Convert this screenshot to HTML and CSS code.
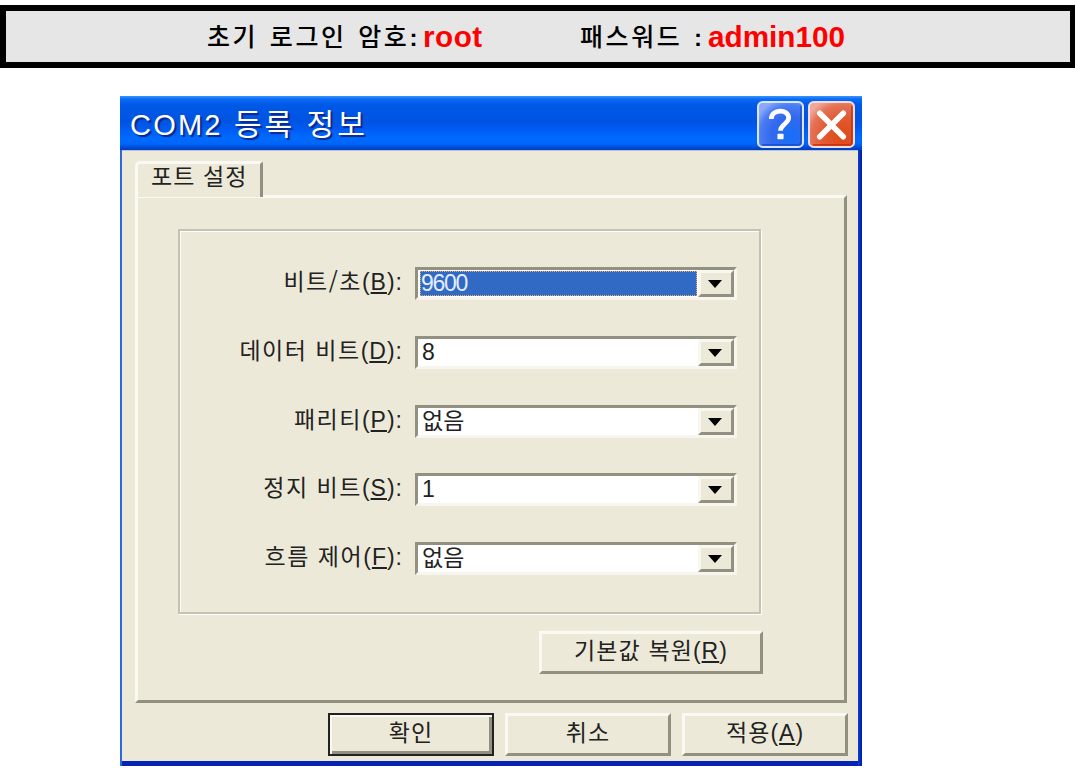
FILE: index.html
```html
<!DOCTYPE html>
<html lang="ko">
<head>
<meta charset="utf-8">
<title>COM2 등록 정보</title>
<link rel="stylesheet" href="styles.css">
</head>
<body>
<header class="banner">
  <span class="banner-label login">초기 로그인 암호<b>:</b></span><strong class="secret root">root</strong>
  <span class="banner-label pass">패스워드 <b>:</b></span><strong class="secret">admin100</strong>
</header>
<main class="dialog">
  <div class="titlebar">
    <h1 class="title"><span class="title-latin">COM2</span> 등록 정보</h1>
    <div class="caption-buttons">
      <svg class="caption" viewBox="0 0 46 46">
        <defs>
          <radialGradient id="blue" cx=".72" cy=".75" r=".85"><stop offset="0" stop-color="#1470f8"/><stop offset=".5" stop-color="#3468ee"/><stop offset=".8" stop-color="#4b7df2"/><stop offset="1" stop-color="#8ba9f8"/></radialGradient>
          <radialGradient id="red" cx=".75" cy=".78" r=".9"><stop offset="0" stop-color="#e04814"/><stop offset=".5" stop-color="#e25a34"/><stop offset=".8" stop-color="#e47356"/><stop offset="1" stop-color="#f0a898"/></radialGradient>
        </defs>
        <rect x="1" y="1" width="44" height="44" rx="4.5" fill="url(#blue)" stroke="#dce6fb" stroke-width="2"/>
        <path d="M43 5V40Q43 43 40 43H5" fill="none" stroke="#1744c0" stroke-width="1.6" opacity=".7"/>
        <path d="M14 17.5C14 7.500 31 7.500 31 16.500C31 22 23 23 23 29" fill="none" stroke="#fff" stroke-width="4.600"/>
        <rect x="20" y="32" width="6" height="5.500" rx=".8" fill="#fff"/>
      </svg>
      <svg class="caption" viewBox="0 0 46 46">
        <rect x="1" y="1" width="44" height="44" rx="4.500" fill="url(#red)" stroke="#f3dcdf" stroke-width="2"/>
        <path d="M43 5V40Q43 43 40 43H5" fill="none" stroke="#b02d08" stroke-width="1.600" opacity=".7"/>
        <path d="M11.500 12L34.500 35M34.500 12L11.500 35" stroke="#fff" stroke-width="5.500" stroke-linecap="round"/>
      </svg>
    </div>
  </div>
  <div class="client">
    <div class="tab">포트 설정</div>
    <section class="page">
      <div class="group">
        <div class="row"><label>비트/초<span class="key">(<u>B</u>):</span></label><div class="combo"><div class="value selected">9600</div><div class="drop"><svg viewBox="0 0 14 8"><path d="M0 0H14L7 8Z"/></svg></div></div></div>
        <div class="row"><label>데이터 비트<span class="key">(<u>D</u>):</span></label><div class="combo"><div class="value">8</div><div class="drop"><svg viewBox="0 0 14 8"><path d="M0 0H14L7 8Z"/></svg></div></div></div>
        <div class="row"><label>패리티<span class="key">(<u>P</u>):</span></label><div class="combo"><div class="value">없음</div><div class="drop"><svg viewBox="0 0 14 8"><path d="M0 0H14L7 8Z"/></svg></div></div></div>
        <div class="row"><label>정지 비트<span class="key">(<u>S</u>):</span></label><div class="combo"><div class="value">1</div><div class="drop"><svg viewBox="0 0 14 8"><path d="M0 0H14L7 8Z"/></svg></div></div></div>
        <div class="row"><label>흐름 제어<span class="key">(<u>F</u>):</span></label><div class="combo"><div class="value">없음</div><div class="drop"><svg viewBox="0 0 14 8"><path d="M0 0H14L7 8Z"/></svg></div></div></div>
      </div>
      <div class="btn restore">기본값 복원<span class="key">(<u>R</u>)</span></div>
    </section>
    <div class="actions">
      <div class="btn default">확인</div>
      <div class="btn">취소</div>
      <div class="btn">적용<span class="key">(<u>A</u>)</span></div>
    </div>
  </div>
</main>
</body>
</html>
```
FILE: styles.css
```css
* { box-sizing: border-box; }
body {
  margin: 0;
  width: 1077px;
  height: 768px;
  overflow: hidden;
  background: #fff;
  color: #222;
  font-family: "Noto Sans CJK KR", sans-serif;
  font-size: 23px;
}
.banner {
  display: flex;
  align-items: center;
  margin: 5px 2px 0 0;
  height: 63px;
  padding-left: 201px;
  border: 6px solid #000;
  border-right-width: 5px;
  background: #e6e6e6;
  color: #000;
  white-space: nowrap;
}
.banner-label {
  font-size: 25px;
  font-weight: 500;
  line-height: 50px;
  letter-spacing: 2.6px;
  word-spacing: 2px;
}
.banner-label b {
  font-family: "Liberation Sans", Arial, sans-serif;
  font-size: 24px;
}
.login { width: 216px; }
.pass { width: 128px; }
.secret {
  font: bold 29.7px/50px "Liberation Sans", Arial, sans-serif;
  color: #f00;
}
.root { width: 157px; letter-spacing: .5px; }
.dialog {
  display: flex;
  flex-direction: column;
  width: 742px;
  height: 670px;
  margin: 28px 0 0 120px;
  background: linear-gradient(90deg, #2d6ae0 0, #2d6ae0 738px, #0a3fd6 738px, #001ca0 742px);
}
.titlebar {
  display: flex;
  justify-content: space-between;
  height: 54px;
  padding: 5px 7px 0 10px;
  background: linear-gradient(180deg, #3a95ff 0, #0a6cf6 3px, #0058e6 9px, #0054e3 26px, #005cf4 34px, #006aff 42px, #0066fa 48px, #0046d0 52px, #003db8 54px);
}
.title {
  margin: 0;
  color: #fff;
  font-size: 30px;
  font-weight: 400;
  line-height: 43px;
  letter-spacing: 3px;
  text-shadow: 2px 2px 1px #0a2a8c;
  white-space: nowrap;
}
.title-latin {
  font-family: "Liberation Sans", Arial, sans-serif;
  font-size: 29px;
  letter-spacing: 2.2px;
}
.caption-buttons { display: flex; gap: 4px; }
.caption { width: 47px; height: 47px; }
.client {
  display: flex;
  flex-direction: column;
  flex: 1;
  margin: 0 4px 0 2px;
  padding: 10px 11px 0 13px;
  background: #ece9d8;
  border-top: 1px solid #b8c4dc;
  border-bottom: 5px solid #0523b4;
}
.tab {
  width: 128px;
  height: 36px;
  margin-bottom: -2px;
  z-index: 1;
  padding-left: 13px;
  background: #ece9d8;
  border: 3px solid #faf9f3;
  border-right-color: #929080;
  border-bottom: 0;
  border-radius: 5px 3px 0 0;
  line-height: 22px;
  letter-spacing: 1.1px;
  white-space: nowrap;
}
.page {
  height: 508px;
  padding: 31px 0 0 40px;
  border: 3px solid #faf9f3;
  border-right-color: #929080;
  border-bottom-color: #929080;
}
.group {
  display: flex;
  flex-direction: column;
  gap: 35.5px;
  width: 583px;
  height: 385px;
  padding-top: 36px;
  border: 2px solid #c5c2b2;
  box-shadow: 1px 1px 0 #fff, inset 1px 1px 0 #fff;
}
.row { display: flex; height: 33.3px; }
label {
  width: 235px;
  padding-right: 12px;
  line-height: 27px;
  letter-spacing: 1.5px;
  text-align: right;
  white-space: nowrap;
}
.key {
  font-family: "Liberation Sans", Arial, sans-serif;
  letter-spacing: 1px;
}
u {
  text-decoration-thickness: 2px;
  text-underline-offset: 2px;
  text-decoration-skip-ink: none;
}
.combo {
  display: flex;
  width: 322px;
  height: 33px;
  border: 3px solid #929080;
  border-right-color: #f7f5ed;
  border-bottom-color: #f7f5ed;
  background: #fff;
}
.value {
  flex: 1;
  padding-left: 4px;
  font-family: "Liberation Sans", "Noto Sans CJK KR", sans-serif;
  line-height: 26px;
}
.selected {
  margin: 1px 1px 1px 2px;
  padding-left: 1px;
  background: #316ac5;
  outline: 1px dotted #e8ae62;
  outline-offset: -1px;
  color: #e4edff;
  line-height: 24px;
  letter-spacing: -1.3px;
}
.drop {
  width: 36px;
  border: 3px solid #f8f7f0;
  border-right-color: #929080;
  border-bottom-color: #929080;
  background: #ece9d8;
}
.drop svg {
  display: block;
  width: 14px;
  height: 8px;
  margin: 7px 0 0 7px;
}
.btn {
  width: 166px;
  height: 43px;
  border: 3px solid #faf9f3;
  border-right-color: #929080;
  border-bottom-color: #929080;
  background: #ece9d8;
  line-height: 30px;
  letter-spacing: 1.1px;
  text-align: center;
  white-space: nowrap;
}
.restore { width: 224px; margin: 17px 0 0 361px; }
.default {
  border: 2px solid #222;
  box-shadow: inset 2px 2px 0 #faf9f3, inset -3px -3px 0 #929080;
  line-height: 32px;
}
.actions {
  display: flex;
  justify-content: flex-end;
  gap: 11px;
  margin: 10px -1px 0 0;
}
```
